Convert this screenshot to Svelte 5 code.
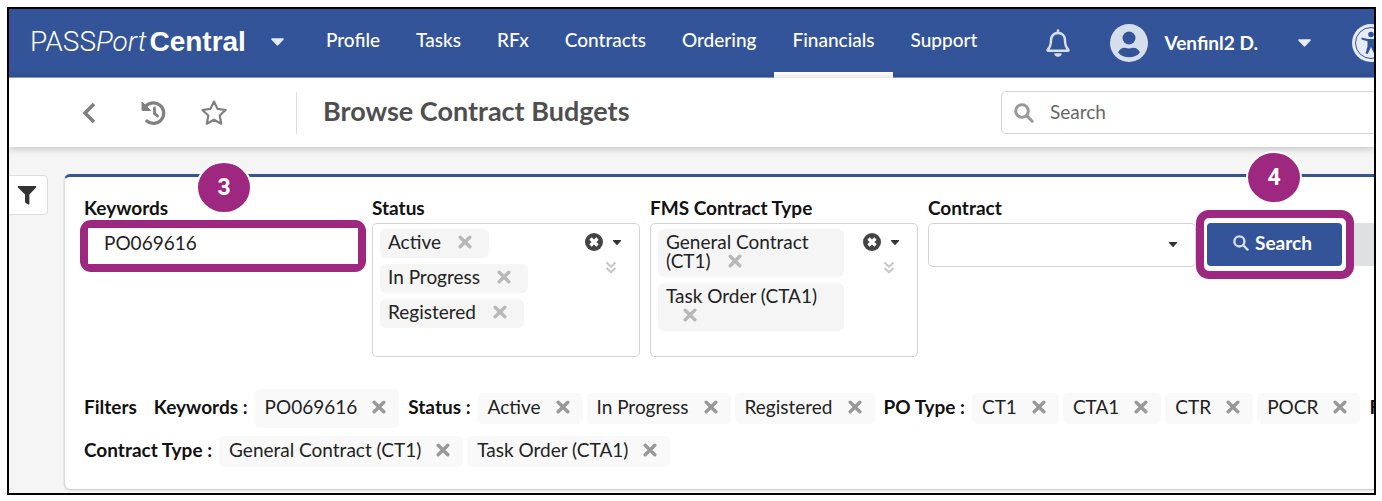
<script lang="ts">
	type Filter = { label: string; values: string[]; tall?: boolean };

	const nav = ["Profile", "Tasks", "RFx", "Contracts", "Ordering", "Financials", "Support"];
	const current = "Financials";

	let keywords = $state("PO069616");
	let contract = $state("");
	let selects = $state([
		{ label: "Status", values: ["Active", "In Progress", "Registered"] },
		{ label: "FMS Contract Type", values: ["General Contract (CT1)", "Task Order (CTA1)"] },
	]);
	let filterRows: Filter[][] = $state([
		[
			{ label: "Keywords :", values: ["PO069616"], tall: true },
			{ label: "Status :", values: ["Active", "In Progress", "Registered"] },
			{ label: "PO Type :", values: ["CT1", "CTA1", "CTR", "POCR"] },
			{ label: "FMS", values: [] },
		],
		[{ label: "Contract Type :", values: ["General Contract (CT1)", "Task Order (CTA1)"] }],
	]);

	function remove(list: { values: string[] }, value: string) {
		list.values = list.values.filter((v) => v !== value);
	}
</script>

{#snippet caret()}
	<svg class="caret" viewBox="0 0 12 7" aria-hidden="true">
		<path d="M1 0h10q1.400 .3.500 1.400L6.700 6.600q-.7.600-1.400 0L.5 1.400Q-.4.300 1 0z" />
	</svg>
{/snippet}

{#snippet cross()}
	<svg class="cross" viewBox="0 0 14 14" aria-hidden="true">
		<path d="M2.200 2.200l9.600 9.600M11.800 2.200l-9.600 9.600" />
	</svg>
{/snippet}

{#snippet magnifier()}
	<svg class="magnifier" viewBox="0 0 20 20" aria-hidden="true">
		<circle cx="8" cy="8" r="6.300" />
		<path d="M12.800 12.800l5.400 5.400" />
	</svg>
{/snippet}

<div class="frame">
	<header class="topbar">
		<button type="button" class="brand">
			<span class="brand-name">PASS<i>Port</i><b>Central</b></span>
			{@render caret()}
		</button>
		<nav class="nav">
			{#each nav as item}
				<a href="#{item}" class="nav-link" class:active={item === current}>{item}</a>
			{/each}
		</nav>
		<button type="button" class="bell" title="Notifications">
			<svg viewBox="0 0 24 28" width="24" height="28" aria-hidden="true">
				<path
					d="M12 4c-4.600 0-7 3.100-7 7.300 0 5.700-1.200 7.400-3.200 9.200-.5.600-.2 1.300.6 1.300h19.200c.8 0 1.100-.7.600-1.300-2-1.800-3.200-3.500-3.200-9.200C19 7.100 16.600 4 12 4z"
					fill="none"
					stroke="currentColor"
					stroke-width="2.500"
				/>
				<path d="M12 1.500v2.500" stroke="currentColor" stroke-width="2.600" stroke-linecap="round" />
				<path d="M8.300 24.300h7.400a3.700 3.400 0 0 1-7.400 0z" fill="currentColor" />
			</svg>
		</button>
		<button type="button" class="user">
			<svg viewBox="0 0 38 38" width="38" height="38" aria-hidden="true">
				<circle cx="19" cy="19" r="19" fill="#d6deec" />
				<circle cx="19" cy="14" r="6.500" fill="#335499" />
				<path d="M8 28.500q2.500-5.200 7-4.800 4 1.400 8 0 4.500-.4 7 4.800-4 4.700-11 4.700T8 28.500z" fill="#335499" />
			</svg>
			<span class="user-name">Venfinl2 D.</span>
			{@render caret()}
		</button>
		<button type="button" class="access" title="Accessibility">
			<svg viewBox="0 0 38 38" width="38" height="38" aria-hidden="true">
				<circle cx="19" cy="19" r="19" fill="#e6ebf4" />
				<circle cx="19" cy="19" r="15.500" fill="none" stroke="#335499" stroke-width="1" />
				<circle cx="19" cy="10.500" r="2.800" fill="#335499" />
				<path
					d="M9.500 13.500l6.500 1.600h6l6.500-1.600v2l-6 1.800v5l2 7.200-2.200.6-3.300-7.200-3.300 7.200-2.200-.6 2-7.200v-5l-6-1.800z"
					fill="#335499"
				/>
			</svg>
		</button>
	</header>

	<div class="subbar">
		<div class="tools">
			<button type="button" title="Back">
				<svg viewBox="0 0 14 22" width="14" height="22" aria-hidden="true">
					<path d="M12 2L3 11l9 9" fill="none" stroke="currentColor" stroke-width="3.600" />
				</svg>
			</button>
			<button type="button" class="history" title="History">
				<svg viewBox="0 0 26 26" width="26" height="26" aria-hidden="true">
					<path
						d="M4.500 6.500A10.300 10.300 0 1 1 5.800 21"
						fill="none"
						stroke="currentColor"
						stroke-width="3.200"
						stroke-linecap="round"
					/>
					<path d="M1 2v8.500h8.500z" fill="currentColor" stroke="currentColor" stroke-linejoin="round" />
					<path d="M13.500 8v5.500l3 2.500" fill="none" stroke="currentColor" stroke-width="2.800" stroke-linecap="round" />
				</svg>
			</button>
			<button type="button" title="Favorite">
				<svg viewBox="0 0 26 26" width="26" height="26" aria-hidden="true">
					<path
						d="M13 1.500l3.500 7.400 8.100 1.100-5.900 5.500 1.500 8.200-7.200-4-7.200 4 1.500-8.200L1.400 10l8.100-1.100z"
						fill="none"
						stroke="currentColor"
						stroke-width="2.200"
						stroke-linejoin="round"
					/>
				</svg>
			</button>
		</div>
		<h1>Browse Contract Budgets</h1>
		<label class="site-search">
			{@render magnifier()}
			<input type="search" placeholder="Search" aria-label="Search" />
		</label>
	</div>

	<main class="page">
		<button type="button" class="filter-tab" title="Filters">
			<svg viewBox="0 0 20 20" width="20" height="20" aria-hidden="true">
				<path d="M1.400 1h17.200q1.200.3.500 1.500L12.400 9.500v9.500q-.5.900-1.500.4l-2.900-2.200V9.500L.9 2.500Q.3 1.300 1.400 1z" fill="currentColor" />
			</svg>
		</button>

		<section class="card">
			<form class="fields" onsubmit={(e) => e.preventDefault()}>
				<div class="field wide">
					<label for="keywords">Keywords</label>
					<div class="ring ring-input">
						<input id="keywords" type="text" bind:value={keywords} />
						<span class="step">3</span>
					</div>
				</div>
				{#each selects as select}
					<div class="field" role="group" aria-label={select.label}>
						<span class="field-label">{select.label}</span>
						<div class="multi">
							<div class="tags">
								{#each select.values as value}
									<span class="tag"
										>{value}<button type="button" title="Remove" onclick={() => remove(select, value)}
											>{@render cross()}</button
										></span
									>
								{/each}
							</div>
							<div class="side">
								<button type="button" title="Clear" onclick={() => (select.values = [])}>
									<svg viewBox="0 0 18 18" width="18" height="18" aria-hidden="true">
										<circle cx="9" cy="9" r="9" fill="#444" />
										<path d="M5.500 5.500l7 7M12.500 5.500l-7 7" stroke="#fff" stroke-width="3.400" />
									</svg>
								</button>
								<button type="button" title="Open">{@render caret()}</button>
								<button type="button" class="more" title="Show more">
									<svg viewBox="0 0 12 14" width="12" height="14" aria-hidden="true">
										<path
											d="M1.500 1.500L6 5.700l4.500-4.200M1.500 7L6 11.200 10.500 7"
											fill="none"
											stroke="#c8c8c8"
											stroke-width="2.200"
										/>
									</svg>
								</button>
							</div>
						</div>
					</div>
				{/each}
				<div class="field">
					<label for="contract">Contract</label>
					<div class="dropdown">
						<select id="contract" bind:value={contract}>
							<option value=""></option>
						</select>
						{@render caret()}
					</div>
				</div>
				<div class="actions">
					<div class="ring-holder">
						<button type="submit" class="btn-search">{@render magnifier()}Search</button>
						<span class="ring-button"></span>
						<span class="step step-button">4</span>
					</div>
					<button type="reset" class="btn-reset" title="Reset"></button>
				</div>
			</form>

			<div class="filters">
				{#each filterRows as row, i}
					<div class="filter-row">
						{#if i === 0}<span class="filters-title">Filters</span>{/if}
						{#each row as filter}
							<span class="filter-label">{filter.label}</span>
							{#each filter.values as value}
								<span class="chip" class:tall={filter.tall}>
									{value}
									<button type="button" title="Remove" onclick={() => remove(filter, value)}>
										{@render cross()}
									</button>
								</span>
							{/each}
						{/each}
					</div>
				{/each}
			</div>
		</section>
	</main>
</div>

<style>
	:global(body) {
		box-sizing: border-box;
		padding: 7px 6px 6px 7px;
		background: #fff;
		color: #222;
		font: 19px/24px Lato, sans-serif;
	}
	.frame,
	.frame * {
		box-sizing: border-box;
	}
	.frame {
		border: 2px solid #000;
		overflow: hidden;
		background: #f5f5f5;
	}
	button {
		display: block;
		flex: none;
		margin: 0;
		border: 0;
		padding: 0;
		background: none;
		color: inherit;
		font: inherit;
		cursor: pointer;
	}
	input,
	select {
		font: inherit;
		color: inherit;
		outline: none;
	}
	svg {
		display: block;
		flex: none;
	}
	.caret {
		width: 10px;
		height: 5px;
		fill: #333;
	}
	.cross {
		width: 14px;
		height: 14px;
		stroke: #999;
		stroke-width: 3.4;
		stroke-linecap: round;
	}
	.magnifier {
		width: 20px;
		height: 20px;
		fill: none;
		stroke: #999;
		stroke-width: 3;
		stroke-linecap: round;
	}

	/* top bar */
	.topbar {
		display: flex;
		align-items: center;
		height: 69px;
		padding-left: 21px;
		border-bottom: 1px solid #8ea1c9;
		background: #335499;
		color: #fff;
	}
	.topbar .caret {
		width: 13px;
		height: 8px;
		fill: #e6ebf4;
	}
	.brand {
		display: flex;
		align-items: center;
		gap: 25px;
		margin-right: 24px;
		padding-bottom: 2px;
	}
	.brand-name {
		font: 300 28px/32px Roboto, sans-serif;
	}
	.brand-name b {
		margin-left: 3px;
		font-family: "Liberation Sans", sans-serif;
		font-weight: 700;
	}
	.nav {
		display: flex;
		align-self: stretch;
		font-weight: 500;
	}
	.nav-link {
		display: flex;
		align-items: center;
		padding: 0 18px 2px;
		border-bottom: 6px solid transparent;
		color: #fff;
		text-decoration: none;
		margin-bottom: -1px;
	}
	.nav-link.active {
		border-color: #fff;
	}
	.bell {
		margin-left: auto;
		color: #d6deec;
	}
	.user {
		display: flex;
		align-items: center;
		margin-left: 40px;
	}
	.user-name {
		margin: 0 40px 0 17px;
		font-weight: 700;
	}
	.access {
		margin: 0 -16px 0 41px;
	}

	/* title bar */
	.subbar {
		position: relative;
		display: flex;
		align-items: center;
		height: 69px;
		background: #fff;
		box-shadow: 0 1px 8px rgba(0, 0, 0, 0.25);
	}
	.tools {
		display: flex;
		align-items: center;
		gap: 34px;
		width: 288px;
		height: 42px;
		padding-left: 73px;
		border-right: 1px solid #ddd;
		color: #808080;
	}
	.history {
		margin-left: 11px;
	}
	h1 {
		margin: 0 auto 0 26px;
		padding-bottom: 4px;
		color: #4f4f4f;
		font-size: 27px;
		font-weight: 700;
		line-height: 32px;
	}
	.site-search {
		display: flex;
		align-items: center;
		gap: 16px;
		width: 384px;
		height: 43px;
		margin-right: -11px;
		padding-left: 12px;
		border: 1px solid #d4d4d4;
		border-radius: 5px;
	}
	.site-search input {
		border: 0;
		padding: 0 0 2px;
		background: none;
	}
	.site-search input::placeholder {
		color: #666;
	}

	/* search form */
	.page {
		display: flex;
		align-items: flex-start;
		gap: 16px;
		padding: 27px 0 4px;
	}
	.filter-tab {
		width: 39px;
		height: 40px;
		margin-top: 1px;
		padding: 0 0 0 8px;
		border: 1px solid #ddd;
		border-left: 0;
		border-radius: 0 5px 5px 0;
		background: #fff;
		color: #333;
	}
	.card {
		flex: none;
		width: 100%;
		padding: 19px 19px 22px;
		border-top: 3px solid #335499;
		border-left: 1px solid #ddd;
		border-radius: 6px;
		background: #fff;
		box-shadow: 0 1px 2px rgba(0, 0, 0, 0.2);
	}
	.fields {
		display: flex;
		gap: 10px;
	}
	.field {
		flex: none;
		width: 268px;
	}
	.field.wide {
		width: 278px;
	}
	.field label,
	.field-label {
		display: block;
		margin-bottom: 3px;
		color: #111;
		font-weight: 700;
	}
	.ring {
		position: relative;
		margin: -3px -4px 0;
		border: 8px solid #9e2780;
		border-radius: 11px;
	}
	.ring-input input {
		display: block;
		width: 100%;
		height: 36px;
		padding: 0 16px 8px;
		border: 0;
	}
	.step {
		position: absolute;
		left: 108px;
		top: -67px;
		width: 56px;
		height: 53px;
		border: 2px solid #fff;
		border-radius: 50%;
		background: #9e2780;
		color: #fff;
		font: 700 23px/50px Roboto, sans-serif;
		text-align: center;
	}
	.multi {
		display: flex;
		justify-content: space-between;
		height: 134px;
		padding: 5px 17px 5px 7px;
		border: 1px solid #d4d4d4;
		border-radius: 5px;
		line-height: 19px;
	}
	.tags {
		display: flex;
		flex-direction: column;
		align-items: flex-start;
		gap: 6px;
		width: 186px;
	}
	.tag {
		padding: 3px 8px 7px;
		border-radius: 6px;
		background: #f5f5f5;
	}
	.tag button {
		display: inline-block;
		margin: 0 9px 0 17px;
	}
	.tag .cross {
		stroke: #b8b8b8;
	}
	.side {
		display: grid;
		grid-template-columns: 18px 10px;
		align-content: start;
		align-items: center;
		gap: 10px 9px;
		padding-top: 4px;
	}
	.more {
		grid-column: 1 / 3;
		justify-self: end;
		margin-right: 5px;
	}
	.dropdown {
		position: relative;
	}
	.dropdown select {
		display: block;
		width: 100%;
		height: 44px;
		padding: 0 36px 0 16px;
		border: 1px solid #d4d4d4;
		border-radius: 5px;
		background: #fff;
		appearance: none;
	}
	.dropdown .caret {
		position: absolute;
		right: 18px;
		top: 19px;
		pointer-events: none;
	}
	.actions {
		display: flex;
		align-items: flex-start;
		flex: none;
		gap: 5px;
		padding-top: 27px;
		margin-left: 1px;
	}
	.ring-holder {
		position: relative;
	}
	.btn-search {
		display: flex;
		align-items: center;
		justify-content: center;
		gap: 6px;
		width: 135px;
		height: 43px;
		padding: 0 4px 3px 0;
		border-radius: 4px;
		background: #335499;
		color: #fff;
		font-weight: 700;
	}
	.btn-search .magnifier {
		width: 16px;
		height: 16px;
		stroke: #d6deec;
	}
	.btn-reset {
		width: 135px;
		height: 43px;
		border-radius: 4px;
		background: #dfe0e2;
	}
	.ring-button {
		position: absolute;
		inset: -13px -12px -13px -11px;
		border: 8px solid #9e2780;
		border-radius: 13px;
		box-shadow: inset 0 0 0 3px #fff;
		pointer-events: none;
	}
	.step-button {
		left: 39px;
		top: -72px;
	}

	/* applied filters */
	.filters {
		display: flex;
		flex-direction: column;
		gap: 8px;
		margin-top: 32px;
	}
	.filter-row {
		display: flex;
		align-items: center;
		white-space: nowrap;
	}
	.filters-title,
	.filter-label {
		padding-bottom: 3px;
		color: #111;
		font-weight: 700;
	}
	.filters-title {
		margin-right: 17px;
	}
	.filter-label {
		margin-right: 7px;
	}
	.chip + .filter-label {
		margin-left: 5px;
	}
	.chip {
		display: flex;
		align-items: center;
		gap: 15px;
		height: 31px;
		margin-right: 4px;
		padding: 0 13px 3px 10px;
		border-radius: 5px;
		background: #f9f9f9;
	}
	.chip.tall {
		height: 39px;
	}
</style>
